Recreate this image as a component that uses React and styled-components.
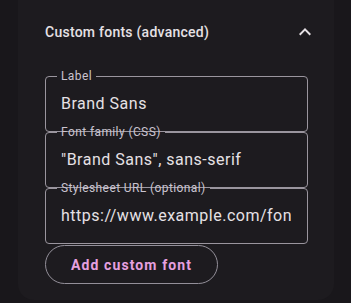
import React from "react";
import styled, { createGlobalStyle } from "styled-components";

const Global = createGlobalStyle`
  html, body {
    margin: 0;
    padding: 0;
    background: #19171b;
    font-family: Roboto, "Liberation Sans", sans-serif;
  }
`;

const Panel = styled.section`
  margin: 0 17px 0 18px;
  padding: 0 26px 16px 27px;
  background: #1d1b1f;
  border-radius: 0 0 16px 16px;
`;

const Header = styled.div`
  display: flex;
  align-items: center;
  justify-content: space-between;
  height: 63px;
`;

const Title = styled.h3`
  margin: 0;
  font-size: 14px;
  font-weight: 500;
  color: #e6e1e5;
  letter-spacing: 0.25px;
`;

const Toggle = styled.button`
  display: flex;
  align-items: center;
  justify-content: center;
  width: 24px;
  height: 24px;
  margin-right: -9px;
  padding: 0;
  border: none;
  background: none;
  color: #e6e1e5;
  cursor: pointer;
`;

const Form = styled.div`
  display: flex;
  flex-direction: column;
  margin-top: 5px;
`;

const Field = styled.fieldset`
  margin: ${(p) => (p.$first ? "0" : "-8px")} 0 0 0;
  padding: 0 0 8px 0;
  border: 1px solid #9a959e;
  border-radius: 4px;
  min-width: 0;
`;

const Legend = styled.legend`
  margin-left: 11px;
  padding: 0 4px;
  font-size: 12px;
  line-height: 16px;
  letter-spacing: 0.4px;
  color: #cac4d0;
`;

const Input = styled.input`
  display: block;
  box-sizing: border-box;
  width: 100%;
  height: 39px;
  padding: 0 16px 0 15px;
  border: none;
  outline: none;
  background: transparent;
  font-family: Roboto, "Liberation Sans", sans-serif;
  font-size: 16px;
  letter-spacing: 0.5px;
  color: #e6e1e5;
`;

const AddButton = styled.button`
  align-self: flex-start;
  margin-top: 1px;
  height: 39px;
  padding: 0 25px;
  border: 1px solid #938f99;
  border-radius: 20px;
  background: transparent;
  font-family: Roboto, "Liberation Sans", sans-serif;
  font-size: 14px;
  font-weight: 700;
  letter-spacing: 1.1px;
  color: #e6a0e0;
  cursor: pointer;
`;

const fields = [
  { label: "Label", value: "Brand Sans" },
  { label: "Font family (CSS)", value: '"Brand Sans", sans-serif' },
  { label: "Stylesheet URL (optional)", value: "https://www.example.com/fonts.css" },
];

export default function App() {
  return (
    <>
      <Global />
      <Panel>
        <Header>
          <Title>Custom fonts (advanced)</Title>
          <Toggle aria-label="Collapse">
            <svg width="24" height="24" viewBox="0 0 24 24" fill="currentColor">
              <path d="M12 8l-6 6 1.41 1.41L12 10.83l4.59 4.58L18 14z" />
            </svg>
          </Toggle>
        </Header>
        <Form>
          {fields.map((f, i) => (
            <Field key={f.label} $first={i === 0}>
              <Legend>{f.label}</Legend>
              <Input defaultValue={f.value} />
            </Field>
          ))}
          <AddButton>Add custom font</AddButton>
        </Form>
      </Panel>
    </>
  );
}
